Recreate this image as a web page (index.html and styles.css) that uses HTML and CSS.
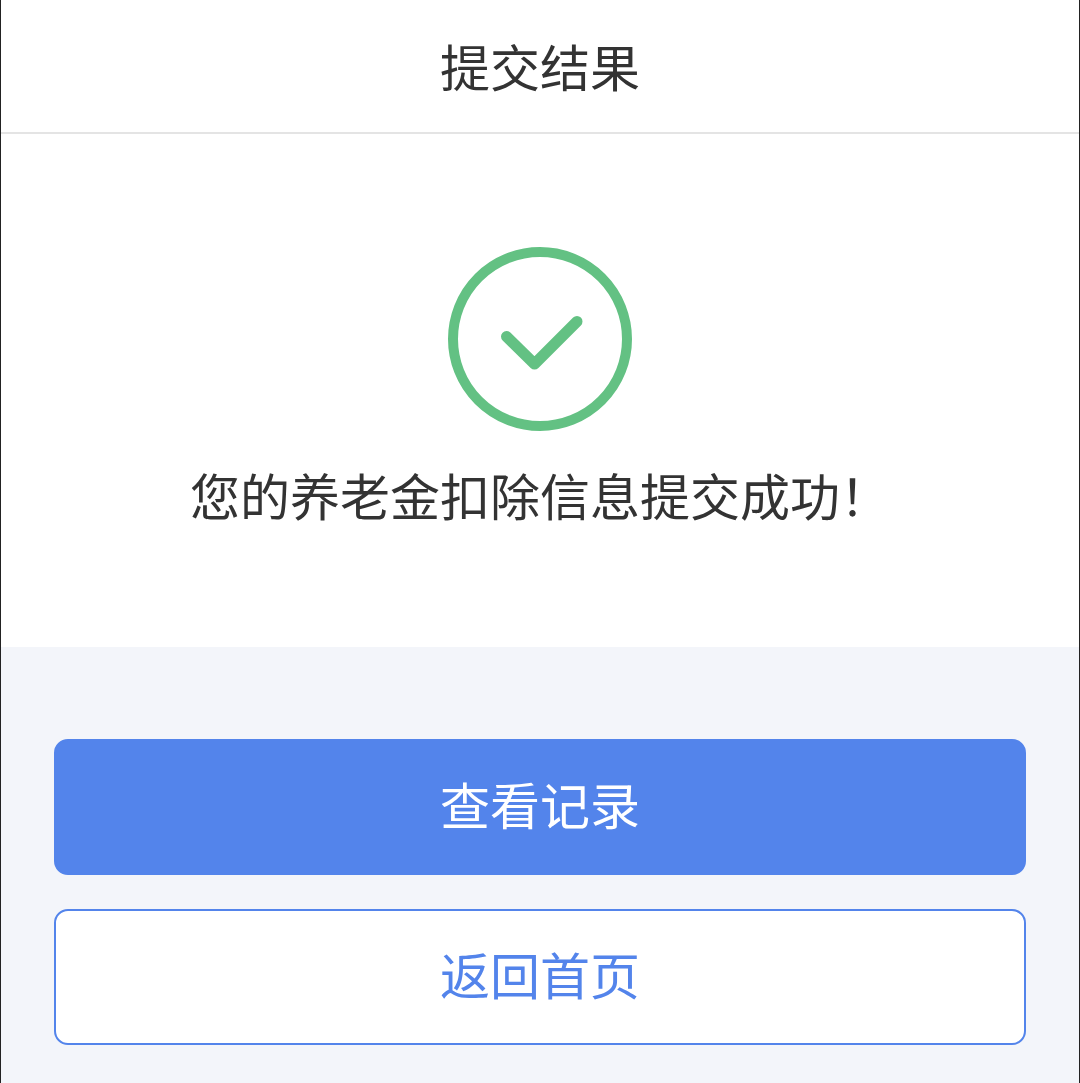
FILE: index.html
```html
<!DOCTYPE html>
<html lang="zh-CN">
<head>
    <meta charset="UTF-8">
    <meta name="viewport" content="width=device-width, initial-scale=1.0">
    <title>提交结果</title>
    <link rel="stylesheet" href="styles.css">
</head>
<body>
    <header class="header">
        <h1>提交结果</h1>
    </header>
    <main>
        <section class="result">
            <svg class="result-icon" viewBox="0 0 184 184" aria-hidden="true">
                <circle cx="92" cy="92" r="87"/>
                <path class="check" d="M58.500 89.500 L86.500 117 L129 74.500"/>
            </svg>
            <p class="result-text">您的养老金扣除信息提交成功！</p>
        </section>
        <div class="actions">
            <button type="button" class="btn btn-primary">查看记录</button>
            <button type="button" class="btn btn-outline">返回首页</button>
        </div>
    </main>
</body>
</html>
```
FILE: styles.css
```css
* {
    box-sizing: border-box;
}
body {
    margin: 0;
    min-height: 100vh;
    font-family: "Noto Sans CJK SC", sans-serif;
    color: #333;
    background-color: #f3f5fa;
    border-left: 1px solid #222;
    border-right: 1px solid #222;
}
.header {
    padding: 30px 0 32px;
    background-color: #fff;
    border-bottom: 2px solid #e4e4e4;
}
h1 {
    margin: 0;
    font-size: 50px;
    font-weight: 400;
    line-height: 70px;
    text-align: center;
}
.result {
    display: flex;
    flex-direction: column;
    align-items: center;
    gap: 28px;
    padding: 113px 20px 118px;
    background-color: #fff;
}
.result-icon {
    width: 184px;
    height: 184px;
    fill: none;
    stroke: #63c183;
    stroke-width: 10;
    stroke-linecap: round;
    stroke-linejoin: round;
}
.check {
    stroke-width: 11;
}
.result-text {
    margin: 0;
    font-size: 50px;
    line-height: 70px;
}
.actions {
    display: flex;
    flex-direction: column;
    gap: 34px;
    padding: 92px 53px 38px;
}
.btn {
    height: 136px;
    padding: 0 0 8px;
    border: 2px solid #5384eb;
    border-radius: 14px;
    font-family: inherit;
    font-size: 50px;
    line-height: 70px;
    cursor: pointer;
}
.btn-primary {
    background-color: #5384eb;
    color: #fff;
}
.btn-outline {
    background-color: #fff;
    color: #5384eb;
}
```
